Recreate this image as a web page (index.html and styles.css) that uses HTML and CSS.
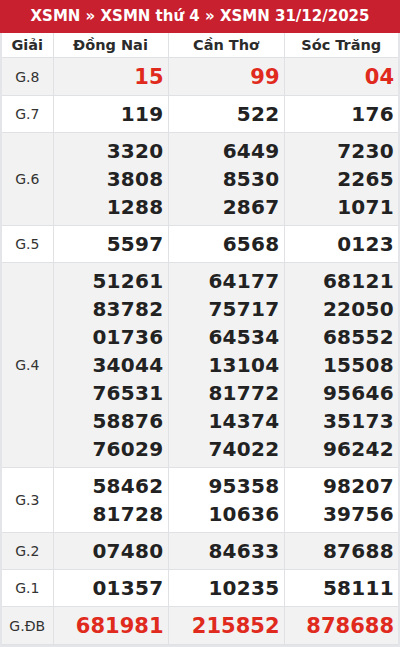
FILE: index.html
```html
<!DOCTYPE html>
<html lang="vi">
<head>
<meta charset="utf-8">
<link rel="stylesheet" href="styles.css">
</head>
<body>
<div class="box">
  <div class="title">XSMN » XSMN thứ 4 » XSMN 31/12/2025</div>
  <table class="kq">
    <colgroup><col class="c0"><col class="c1"><col class="c2"><col class="c3"></colgroup>
    <thead>
      <tr><th>Giải</th><th>Đồng Nai</th><th>Cần Thơ</th><th>Sóc Trăng</th></tr>
    </thead>
    <tbody>
      <tr class="alt big"><td class="lbl">G.8</td><td class="red">15</td><td class="red">99</td><td class="red">04</td></tr>
      <tr><td class="lbl">G.7</td><td>119</td><td>522</td><td>176</td></tr>
      <tr class="alt"><td class="lbl">G.6</td><td>3320<br>3808<br>1288</td><td>6449<br>8530<br>2867</td><td>7230<br>2265<br>1071</td></tr>
      <tr><td class="lbl">G.5</td><td>5597</td><td>6568</td><td>0123</td></tr>
      <tr class="alt"><td class="lbl">G.4</td><td>51261<br>83782<br>01736<br>34044<br>76531<br>58876<br>76029</td><td>64177<br>75717<br>64534<br>13104<br>81772<br>14374<br>74022</td><td>68121<br>22050<br>68552<br>15508<br>95646<br>35173<br>96242</td></tr>
      <tr><td class="lbl">G.3</td><td>58462<br>81728</td><td>95358<br>10636</td><td>98207<br>39756</td></tr>
      <tr class="alt"><td class="lbl">G.2</td><td>07480</td><td>84633</td><td>87688</td></tr>
      <tr><td class="lbl">G.1</td><td>01357</td><td>10235</td><td>58111</td></tr>
      <tr class="alt big"><td class="lbl">G.ĐB</td><td class="red">681981</td><td class="red">215852</td><td class="red">878688</td></tr>
    </tbody>
  </table>
</div>
</body>
</html>
```

FILE: styles.css
```css
html, body {
  margin: 0;
  padding: 0;
  background: #fff;
}
body {
  font-family: "DejaVu Sans", sans-serif;
  color: #222;
}
.box {
  width: 400px;
  border-bottom: 2px solid #e3e5e8;
  box-sizing: border-box;
}
.title {
  background: #c8202f;
  color: #fff;
  font-weight: bold;
  font-size: 15px;
  height: 33px;
  line-height: 33px;
  text-align: center;
}
.kq {
  width: 100%;
  border-collapse: collapse;
  table-layout: fixed;
  border-left: 2px solid #e3e5e8;
  border-right: 2px solid #e3e5e8;
}
.c0 { width: 52px; }
.c1 { width: 115px; }
.c2 { width: 116px; }
.c3 { width: 115px; }
.kq th {
  font-size: 14.5px;
  font-weight: bold;
  color: #2b2b2b;
  height: 24px;
  padding: 0;
  border: 1px solid #dfe1e4;
  border-top: 0;
  text-align: center;
}
.kq td {
  border: 1px solid #dfe1e4;
  padding: 4px 4px 4px 0;
  text-align: right;
  font-weight: bold;
  font-size: 20px;
  line-height: 28px;
  color: #222;
  letter-spacing: 0.3px;
}
.kq td.lbl {
  text-align: center;
  font-weight: normal;
  font-size: 14px;
  color: #333;
  padding: 0;
  letter-spacing: 0;
}
.kq tr.alt td { background: #f2f2f2; }
.kq tr.big td { height: 29px; }
.kq td.red {
  color: #e02a1d;
  font-size: 21px;
  letter-spacing: 0;
}
```
